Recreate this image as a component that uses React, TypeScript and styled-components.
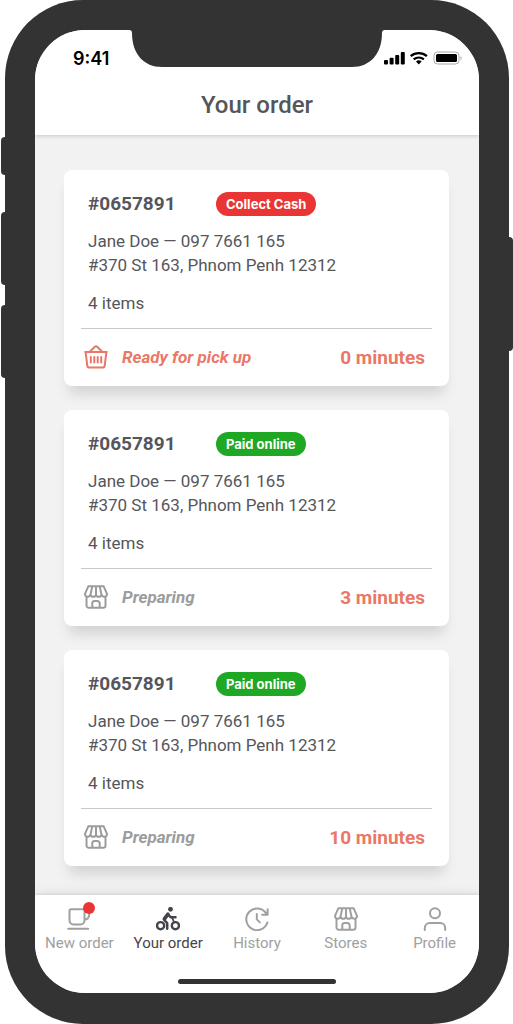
import React from "react";
import styled, { createGlobalStyle, css } from "styled-components";

const GlobalStyle = createGlobalStyle`
  *, *::before, *::after { box-sizing: border-box; }
  body { margin: 0; background: #fff; font-family: Roboto, "Liberation Sans", sans-serif; color: #55565a; }
  h1, h2, p, ul { margin: 0; padding: 0; font-weight: inherit; }
  ul { list-style: none; }
`;

const Phone = styled.div`
  position: relative;
  display: flex;
  flex-direction: column;
  min-height: 100vh;
  margin: 0 4px 0 5px;
  padding: 30px 30px 31px;
  border-radius: 78px;
  background: #333;
`;

const SideButton = styled.span<{ $side: "left" | "right"; $top: number; $height: number }>`
  position: absolute;
  top: ${(p) => p.$top}px;
  height: ${(p) => p.$height}px;
  width: 4px;
  background: #333;
  ${(p) =>
    p.$side === "left"
      ? css`left: -4px; border-radius: 4px 0 0 4px;`
      : css`right: -4px; border-radius: 0 4px 4px 0;`}
`;

const Screen = styled.div`
  flex: 1;
  display: flex;
  flex-direction: column;
  border-radius: 50px;
  overflow: hidden;
  background: #f2f2f2;
`;

const Header = styled.header`
  position: relative;
  background: #fff;
  box-shadow: 0 1px 4px rgba(0, 0, 0, 0.18);
`;

const StatusBar = styled.div`
  display: grid;
  grid-template-columns: 1fr auto 1fr;
  height: 43px;
`;

const Clock = styled.time`
  align-self: end;
  padding-left: 38px;
  font: 600 18px/28px Inter, sans-serif;
  color: #000;
`;

const StatusIcons = styled.div`
  align-self: end;
  justify-self: start;
  height: 30px;
  display: flex;
  align-items: center;
`;

const Title = styled.h1`
  font-size: 24px;
  font-weight: 500;
  line-height: 28px;
  padding: 18px 0 16px;
  text-align: center;
`;

const Orders = styled.ul`
  flex: 1;
  display: flex;
  flex-direction: column;
  gap: 24px;
  padding: 35px 30px 29px 29px;
`;

const Card = styled.li`
  padding: 20px 17px 0;
  border-radius: 8px;
  background: #fff;
  box-shadow: 0 12px 14px -5px rgba(0, 0, 0, 0.14);
`;

const CardHead = styled.div`
  display: flex;
  align-items: center;
  height: 28px;
  padding: 0 7px;
`;

const OrderId = styled.h2`
  width: 128px;
  font-size: 19px;
  font-weight: 700;
  line-height: 28px;
`;

const Badge = styled.span<{ $paid: boolean }>`
  padding: 0 10px;
  border-radius: 12px;
  background: ${(p) => (p.$paid ? "#1fa823" : "#ea3535")};
  color: #fff;
  font: 700 13px/24px Inter, sans-serif;
`;

const Details = styled.div`
  padding: 11px 7px 13px;
  font-size: 17px;
  line-height: 24px;
`;

const Items = styled.p`
  margin-top: 14px;
`;

const CardFoot = styled.div<{ $ready: boolean }>`
  display: flex;
  align-items: center;
  gap: 14px;
  height: 58px;
  padding: 0 7px 1px 3px;
  border-top: 1px solid #c6c8c8;
  color: ${(p) => (p.$ready ? "#e97868" : "#9c9c9c")};
`;

const Status = styled.span`
  flex: 1;
  font-size: 17px;
  font-style: italic;
  font-weight: 700;
`;

const Minutes = styled.span`
  font-size: 19px;
  font-weight: 700;
  color: #e97868;
`;

const TabBar = styled.nav`
  position: relative;
  padding: 12px 0 9px;
  background: #fff;
  box-shadow: 0 -1px 3px rgba(0, 0, 0, 0.1), 0 -4px 12px rgba(0, 0, 0, 0.05);
`;

const Tabs = styled.div`
  display: grid;
  grid-template-columns: repeat(5, 1fr);
`;

const Tab = styled.a<{ $active?: boolean }>`
  display: flex;
  flex-direction: column;
  align-items: center;
  font-size: 15px;
  line-height: 24px;
  text-decoration: none;
  white-space: nowrap;
  color: ${(p) => (p.$active ? "#44454c" : "#a0a0a0")};
`;

const IconBox = styled.span`
  position: relative;
  height: 24px;
`;

const Dot = styled.span`
  position: absolute;
  top: -5px;
  right: -4px;
  width: 12px;
  height: 12px;
  border-radius: 50%;
  background: #ea3535;
`;

const HomeBar = styled.div`
  width: 158px;
  height: 5px;
  margin: 24px auto 0;
  border-radius: 3px;
  background: #333;
`;

const Line = styled.svg.attrs({ width: 24, height: 24, viewBox: "0 0 24 24", "aria-hidden": true })`
  display: block;
  flex: none;
  fill: none;
  stroke: currentColor;
  stroke-width: 2;
  stroke-linecap: round;
  stroke-linejoin: round;
`;

const BasketIcon = () => (
  <Line>
    <path d="M1.2 7h21.6M1.6 7.2l1.7 13.4A2.2 2.2 0 0 0 5.5 22.6h13a2.2 2.2 0 0 0 2.2-2L22.4 7.2M5.5 7 10.6 2a2 2 0 0 1 2.8 0L18.5 7" />
    <path d="M6.8 12v5.5M10.3 12v5.5M13.7 12v5.5M17.2 12v5.5" />
  </Line>
);

const StoreIcon = () => (
  <Line>
    <path d="M4.4 1.2h15.2L23 8.8a2.8 2.8 0 0 1-5.5.8 2.8 2.8 0 0 1-5.5 0 2.8 2.8 0 0 1-5.5 0A2.8 2.8 0 0 1 1 8.8zM12 1.2v8.4M8.3 1.2 6.5 9.6M15.7 1.2l1.8 8.4M2.5 12v8.5a2.3 2.3 0 0 0 2.3 2.3h14.4a2.3 2.3 0 0 0 2.3-2.3V12M8.3 22.8v-4.4a2.4 2.4 0 0 1 2.4-2.4h2.6a2.4 2.4 0 0 1 2.4 2.4v4.4" />
  </Line>
);

const CupIcon = () => (
  <Line>
    <path d="M4 2.3h13.5v11.2a4 4 0 0 1-4 4h-7a4 4 0 0 1-4-4V3.8A1.5 1.5 0 0 1 4 2.3zM17.5 4.5h4.7V8a4.5 4.5 0 0 1-4.5 4.5M1.2 21.7h20" />
  </Line>
);

const RiderIcon = () => (
  <Line>
    <circle cx="4.6" cy="18.7" r="3.6" strokeWidth="2.4" />
    <circle cx="19.4" cy="18.7" r="3.6" strokeWidth="2.4" />
    <circle cx="14.5" cy="2.3" r="2.4" fill="currentColor" stroke="none" />
    <path d="M11.2 21.7v-5.5L8.2 13a1.2 1.2 0 0 1 0-1.600l3.5-4 3.2 2.800h4.600" strokeWidth="2.5" />
    <path d="M12 7.2 8.5 11.8" strokeWidth="3.6" />
    <path d="M16 10.5l2 4.500" strokeWidth="1.8" />
  </Line>
);

const HistoryIcon = () => (
  <Line>
    <path d="M22.6 2.3v5.400h-5.400M21.2 6.500A10.8 10.8 0 1 0 22.4 15.500M11.8 7v5.400l3 3" />
  </Line>
);

const PersonIcon = () => (
  <Line>
    <circle cx="12" cy="6.2" r="5" />
    <path d="M1.8 23v-2a5 5 0 0 1 5-5h10.4a5 5 0 0 1 5 5v2" />
  </Line>
);

const StatusGlyphs = () => (
  <svg width="80" height="14" viewBox="0 0 80 14" role="img" aria-label="Full signal, Wi-Fi on, battery full">
    <rect x="0" y="9" width="4" height="4.5" rx="1" />
    <rect x="5.6" y="6.8" width="4" height="6.7" rx="1" />
    <rect x="11.2" y="3.9" width="4" height="9.6" rx="1" />
    <rect x="16.8" y="1" width="4" height="12.5" rx="1" />
    <g fill="none" stroke="#000" strokeWidth="2.3">
      <path d="M26.7 5.2a12.4 12.4 0 0 1 16.2 0" />
      <path d="M29.7 8.4a8 8 0 0 1 10.2 0" />
    </g>
    <path d="M32 10.6a4.2 4.2 0 0 1 5.6 0l-2.8 2.9z" />
    <rect x="50" y="1" width="25" height="12" rx="3.5" fill="none" stroke="#a6a6a6" />
    <rect x="52" y="3" width="21" height="8" rx="1.5" />
    <path d="M76.5 5.2c1.6.6 1.6 3 0 3.8z" fill="#a6a6a6" />
  </svg>
);

const Notch = () => (
  <svg width="254" height="37" viewBox="0 0 254 37" fill="#333" aria-hidden="true">
    <path d="M0 0h254a3 3 0 0 0-2 3C252 24 240 37 222 37H32C14 37 2 24 2 3a3 3 0 0 0-2-3z" />
  </svg>
);

type Order = { id: string; paid: boolean; ready: boolean; minutes: number };

const orders: Order[] = [
  { id: "#0657891", paid: false, ready: true, minutes: 0 },
  { id: "#0657891", paid: true, ready: false, minutes: 3 },
  { id: "#0657891", paid: true, ready: false, minutes: 10 },
];

const tabs = [
  { label: "New order", Icon: CupIcon, alert: true },
  { label: "Your order", Icon: RiderIcon, active: true },
  { label: "History", Icon: HistoryIcon },
  { label: "Stores", Icon: StoreIcon },
  { label: "Profile", Icon: PersonIcon },
];

const OrderCard = ({ order }: { order: Order }) => (
  <Card>
    <CardHead>
      <OrderId>{order.id}</OrderId>
      <Badge $paid={order.paid}>{order.paid ? "Paid online" : "Collect Cash"}</Badge>
    </CardHead>
    <Details>
      <p>Jane Doe — 097 7661 165</p>
      <p>#370 St 163, Phnom Penh 12312</p>
      <Items>4 items</Items>
    </Details>
    <CardFoot $ready={order.ready}>
      {order.ready ? <BasketIcon /> : <StoreIcon />}
      <Status>{order.ready ? "Ready for pick up" : "Preparing"}</Status>
      <Minutes>{order.minutes} minutes</Minutes>
    </CardFoot>
  </Card>
);

export default function App() {
  return (
    <>
      <GlobalStyle />
      <Phone>
        <SideButton $side="left" $top={137} $height={38} />
        <SideButton $side="left" $top={212} $height={73} />
        <SideButton $side="left" $top={305} $height={73} />
        <SideButton $side="right" $top={237} $height={114} />
        <Screen>
          <Header>
            <StatusBar>
              <Clock>9:41</Clock>
              <Notch />
              <StatusIcons>
                <StatusGlyphs />
              </StatusIcons>
            </StatusBar>
            <Title>Your order</Title>
          </Header>
          <Orders>
            {orders.map((order, i) => (
              <OrderCard key={i} order={order} />
            ))}
          </Orders>
          <TabBar>
            <Tabs>
              {tabs.map(({ label, Icon, active, alert }) => (
                <Tab key={label} href="#" $active={active} aria-current={active ? "page" : undefined}>
                  <IconBox>
                    <Icon />
                    {alert && <Dot />}
                  </IconBox>
                  {label}
                </Tab>
              ))}
            </Tabs>
            <HomeBar />
          </TabBar>
        </Screen>
      </Phone>
    </>
  );
}
